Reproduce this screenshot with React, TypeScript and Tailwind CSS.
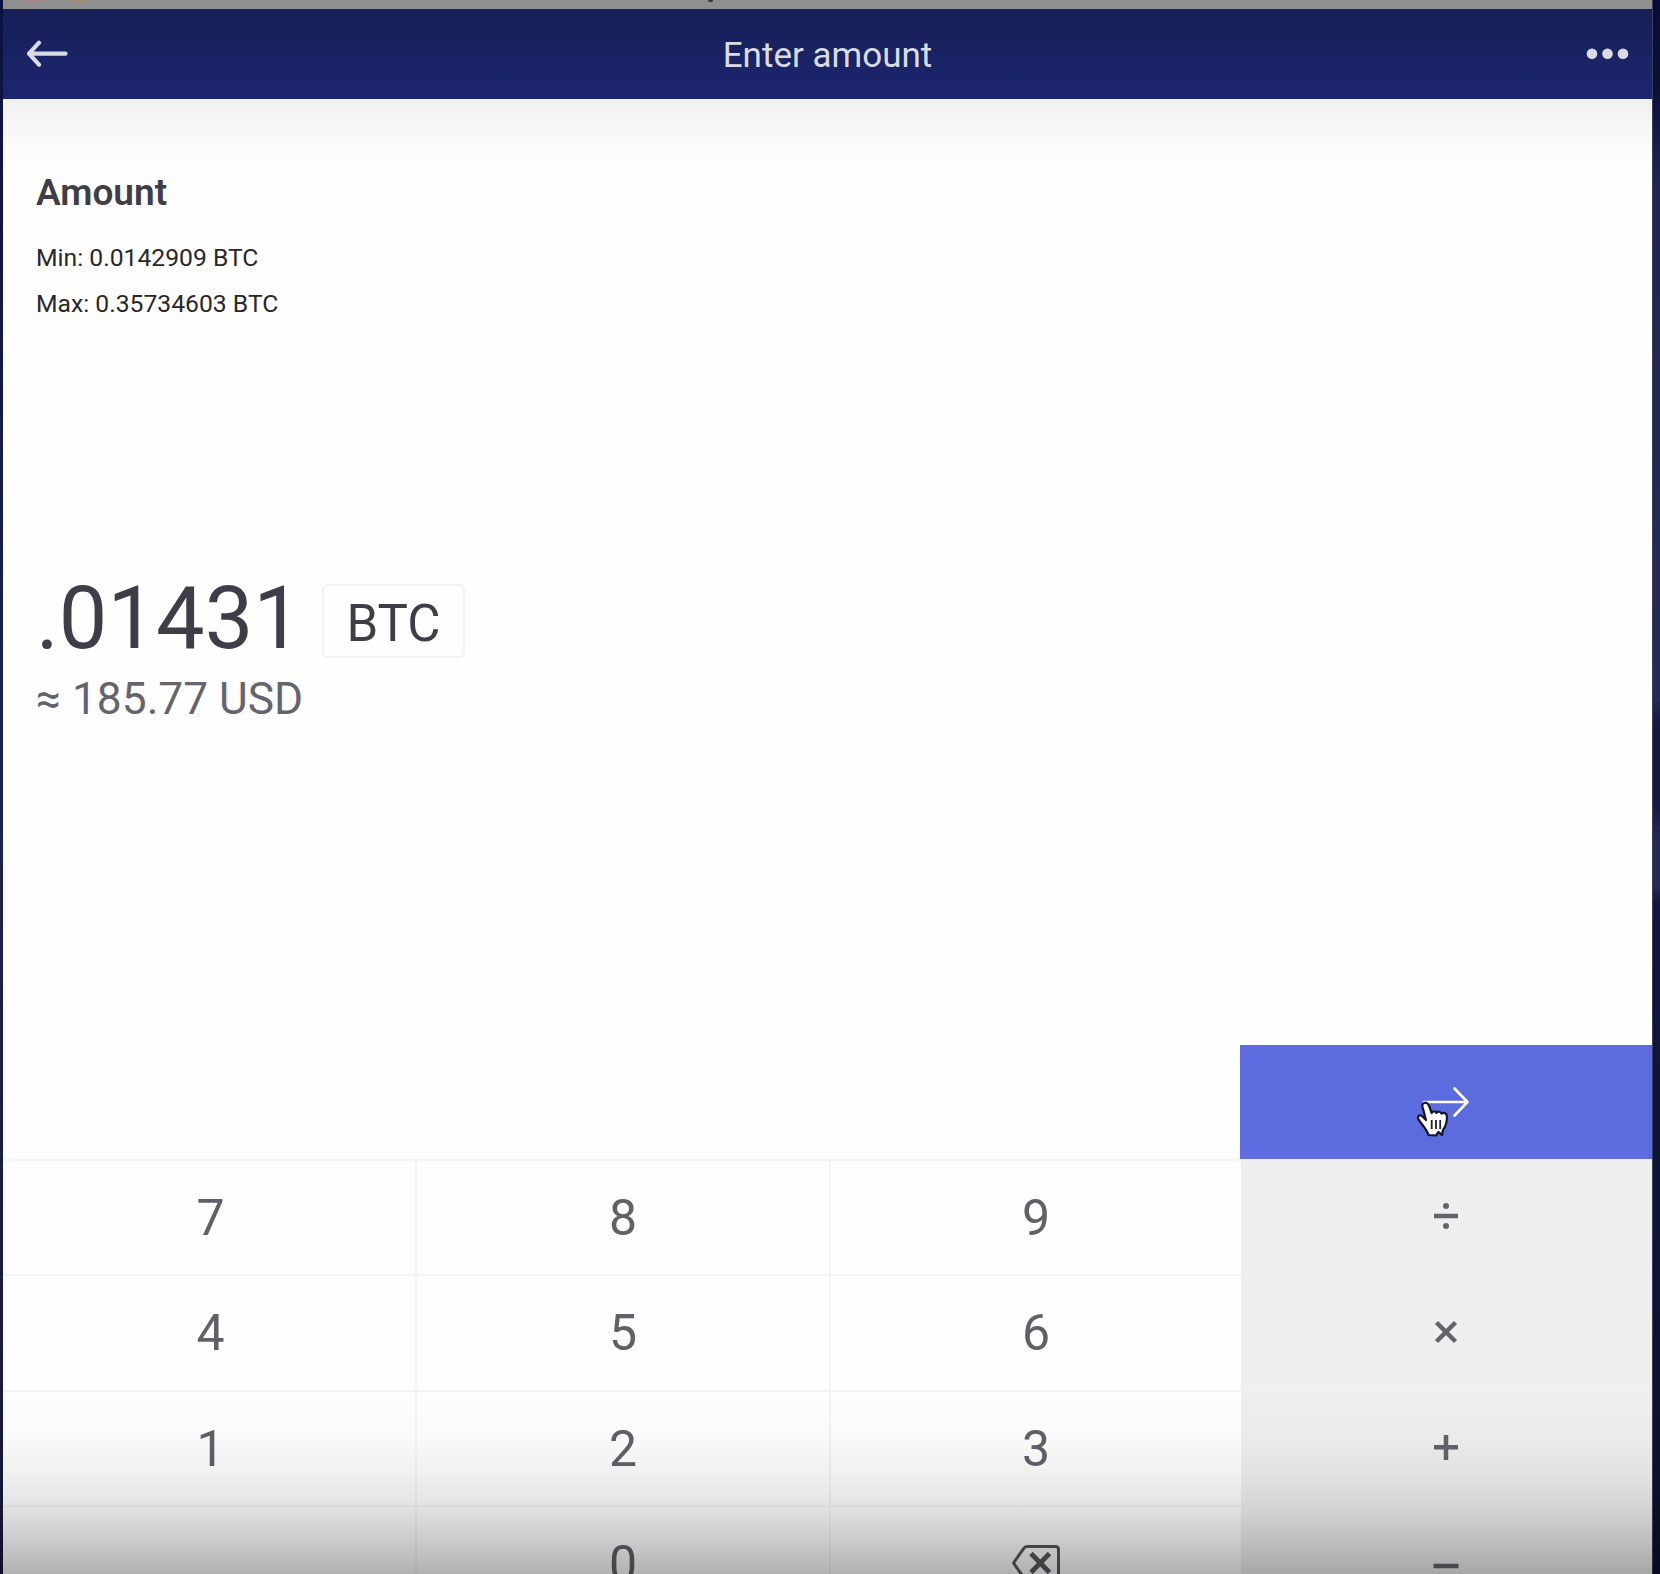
import React from "react";

function Key({ children, last = false, first = false }: { children?: React.ReactNode; last?: boolean; first?: boolean }) {
  return (
    <div
      className={
        "flex items-center justify-center border-t-2 border-[#f4f4f5] text-[50px] leading-none text-[#606069] " +
        (last ? "" : "border-r-2 ") +
        (first ? "pl-[3px]" : "")
      }
    >
      {children}
    </div>
  );
}

function Operator({ d, dots = false, low = false }: { d: string; dots?: boolean; low?: boolean }) {
  return (
    <div className={"flex items-center justify-center bg-[#efefef] pr-[2px] " + (low ? "pt-[6px] " : "") + (dots ? "pb-[2px]" : "")}>
      <svg className="h-8 w-8" viewBox="-16 -16 32 32" fill="none" stroke="#63636c" strokeWidth="4.500">
        <path d={d} />
        {dots && (
          <g fill="#63636c" stroke="none">
            <circle cy="-10" r="3" />
            <circle cy="10" r="3" />
          </g>
        )}
      </svg>
    </div>
  );
}

function Backspace() {
  return (
    <svg className="mb-[2px] h-10 w-[52px]" viewBox="0 0 52 40" fill="none" stroke="#57575f" strokeWidth="3">
      <path d="M17 3.500H45.500Q48.500 3.500 48.500 6.500V33.500Q48.500 36.500 45.500 36.500H17Q15 36.500 13.800 34.600L3.500 20L13.800 5.400Q15 3.500 17 3.500Z" strokeLinejoin="round" />
      <path d="M21 10.500L39.500 29.500M39.500 10.500L21 29.500" strokeWidth="4.800" />
    </svg>
  );
}

function Pointer() {
  return (
    <svg className="absolute left-[176px] top-[56px] h-9 w-[34px]" viewBox="0 0 34 36">
      <path
        d="M8.500 2C10.500 1 12.500 3 13.500 6L15.700 12C16 10 19.500 9.500 20.500 12C21.500 10 24.500 10.500 25.500 12.500C27.500 11 31 12 31 15.500C31 21 30 25 27 29L26 34L22.500 31L20 34.500L12.500 34C11 29 7 25 2.500 18.500C0.500 15 4 13 7 16L10 19L6.500 6C6 4 6.500 2.500 8.500 2Z"
        fill="white"
        stroke="#11182e"
        strokeWidth="2.200"
        strokeLinejoin="round"
      />
      <path d="M15.700 19V28M20 19V28M24.200 19V28" stroke="#222" strokeWidth="1.800" />
    </svg>
  );
}

export default function App() {
  return (
    <div className="relative flex h-[1574px] w-[1660px] overflow-hidden bg-[#141a40] font-[Roboto,sans-serif]">
      <div className="w-[3px] shrink-0 bg-linear-to-b from-[#0c1240] via-[#1b2350] to-[#15183a]" />
      <main className="flex w-[1649px] shrink-0 flex-col bg-[#fefefe]">
        <div className="flex h-[9px] shrink-0 items-start bg-[#8f8f8f]">
          <span className="ml-[22px] h-px w-[20px] bg-[#a8807f]" />
          <span className="ml-[24px] h-px w-[18px] bg-[#a38c70]" />
          <span className="ml-[621px] h-[2px] w-[5px] rounded-b-full bg-[#333]" />
        </div>
        <header className="grid h-[90px] shrink-0 grid-cols-3 items-center bg-linear-to-b from-[#171f57] to-[#1c266f] px-6 text-[#d9dce5]">
          <svg className="h-8 w-11" viewBox="0 0 44 32" fill="none" stroke="currentColor" strokeWidth="4.200" strokeLinecap="round" strokeLinejoin="round">
            <path d="M38.500 15.700H2M12 4.700L2 15.700L12 26.700" />
          </svg>
          <h1 className="pt-[2px] text-center text-[35px] leading-none">Enter amount</h1>
          <svg className="-mr-1 h-4 w-12 justify-self-end" viewBox="0 0 48 16" fill="currentColor">
            <circle cx="8" cy="7.700" r="5.300" />
            <circle cx="23.500" cy="7.700" r="5.300" />
            <circle cx="39" cy="7.700" r="5.300" />
          </svg>
        </header>

        <section className="flex h-[946px] shrink-0 flex-col bg-[linear-gradient(to_bottom,#efefef_0px,#f6f6f6_22px,#fbfbfb_46px,#fefefe_85px)] px-[33px] pt-[70px] text-[#3f3e48]">
          <h2 className="h-[48px] text-[37px] leading-[48px] font-semibold">Amount</h2>
          <p className="mt-[18px] text-[24.700px] leading-[45px] text-[#28282b]">Min: 0.0142909 BTC</p>
          <p className="mt-px text-[24.700px] leading-[45px] text-[#28282b]">Max: 0.35734603 BTC</p>
          <div className="mt-[255px] flex h-[80px] items-center">
            <span className="-mt-[5px] w-[286px] text-[86.500px] leading-[80px]">.01431</span>
            <span className="-mt-px flex h-[74px] w-[143px] items-center justify-center rounded-md border-2 border-[#f3f3f4] pt-[8px] text-[51px]">BTC</span>
          </div>
          <p className="mt-[8px] text-[44.300px] leading-[60px] text-[#65646d]">≈ 185.77 USD</p>
        </section>

        <div className="relative flex h-[114px] w-[412px] shrink-0 items-center justify-center self-end bg-[#5c6cdf]">
          <svg className="h-8 w-12" viewBox="0 0 48 32" fill="none" stroke="white" strokeWidth="2.600" strokeLinecap="round" strokeLinejoin="round">
            <path d="M2 16H45.500M32.500 2.500L45.500 16L32.500 29.500" />
          </svg>
          <Pointer />
        </div>

        <div className="grid shrink-0 grid-cols-[414px_414px_410px_411px] grid-rows-[115px_116px_115px_115px]">
          <Key first>7</Key><Key>8</Key><Key last>9</Key><Operator d="M-12 0H12" dots />
          <Key first>4</Key><Key>5</Key><Key last>6</Key><Operator d="M-9.500 -9.500L9.500 9.500M9.500 -9.500L-9.500 9.500" />
          <Key first>1</Key><Key>2</Key><Key last>3</Key><Operator d="M-12 -.7H12M0 -13V12" />
          <Key first /><Key>0</Key><Key last><Backspace /></Key><Operator d="M-12.500 0H12.500" low />
        </div>
      </main>
      <div className="flex-1 border-l border-[#3a4058] bg-[linear-gradient(to_bottom,#090d36_0px,#0b103a_90px,#1e2650_180px,#232c54_700px,#15173c_725px,#15173c_800px,#222b56_840px,#222b56_885px,#10163c_905px,#0f1538_1150px,#0c1026_1574px)]" />
      <div className="pointer-events-none absolute inset-x-0 bottom-0 h-[194px] bg-[linear-gradient(to_bottom,rgba(0,0,0,0)_0px,rgba(0,0,0,0.015)_55px,rgba(0,0,0,0.055)_94px,rgba(0,0,0,0.11)_127px,rgba(0,0,0,0.2)_160px,rgba(0,0,0,0.3)_194px)]" />
    </div>
  );
}
